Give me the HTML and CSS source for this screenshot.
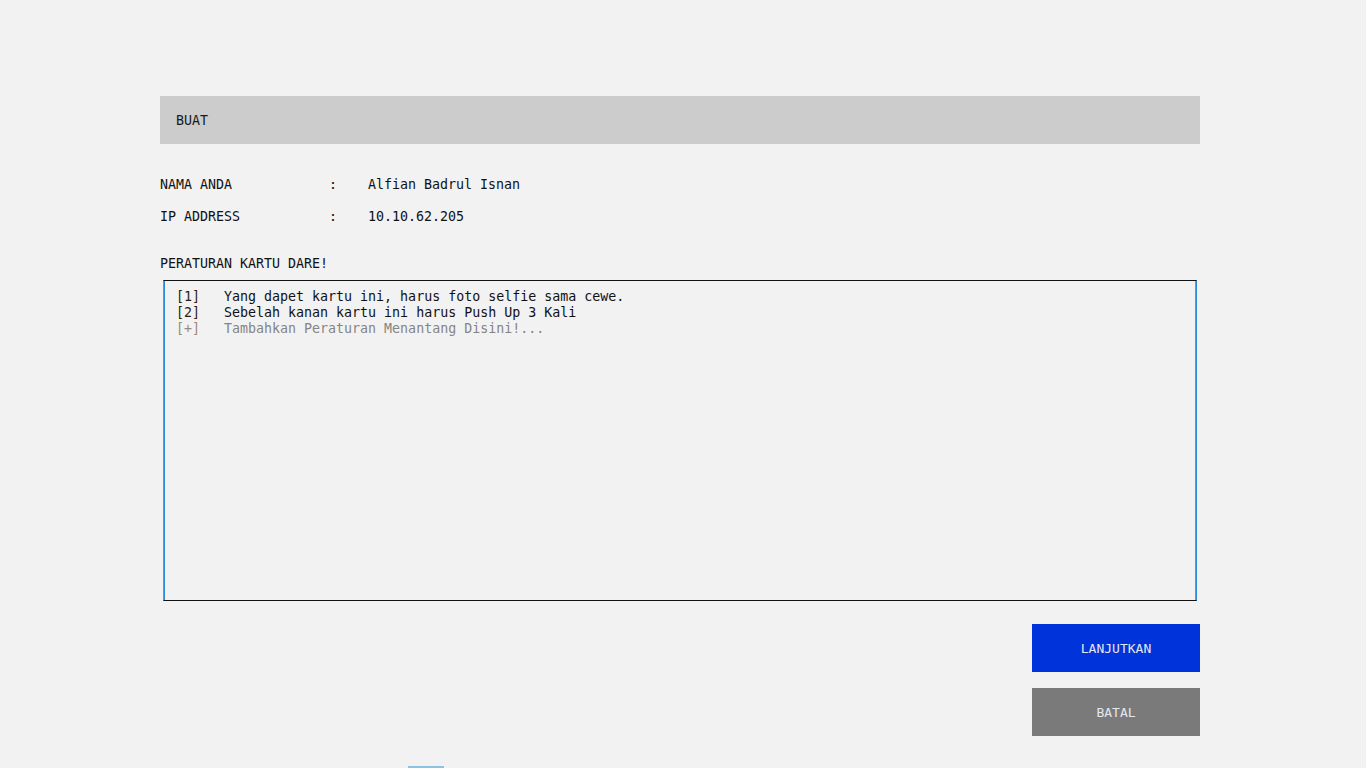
FILE: index.html
```html
<!DOCTYPE html>
<html lang="id">
<head>
<meta charset="utf-8">
<title>Buat</title>
<link rel="stylesheet" href="styles.css">
</head>
<body>
<main class="page">
  <header class="titlebar">BUAT</header>

  <section class="info">
    <div class="info-row"><span class="label">NAMA ANDA</span><span class="colon">:</span><span class="value">Alfian Badrul Isnan</span></div>
    <div class="info-row"><span class="label">IP ADDRESS</span><span class="colon">:</span><span class="value">10.10.62.205</span></div>
  </section>

  <h2 class="rules-title">PERATURAN KARTU DARE!</h2>
  <div class="rules-box">
    <div class="rule"><span class="num">[1]</span><span class="text">Yang dapet kartu ini, harus foto selfie sama cewe.</span></div>
    <div class="rule"><span class="num">[2]</span><span class="text">Sebelah kanan kartu ini harus Push Up 3 Kali</span></div>
    <div class="rule placeholder"><span class="num">[+]</span><span class="text">Tambahkan Peraturan Menantang Disini!...</span></div>
  </div>

  <div class="actions">
    <button class="btn btn-primary">LANJUTKAN</button>
    <button class="btn btn-cancel">BATAL</button>
  </div>
</main>
<div class="scroll-indicator"></div>
</body>
</html>
```

FILE: styles.css
```css
* { box-sizing: border-box; }

html, body {
  margin: 0;
  padding: 0;
  background: #f2f2f2;
  height: 768px;
  overflow: hidden;
}

body {
  font-family: "DejaVu Sans Mono", "Liberation Mono", monospace;
  font-size: 13.3px;
  color: #111;
  position: relative;
}

.page {
  width: 1040px;
  margin: 0 0 0 160px;
  padding-top: 96px;
  display: flex;
  flex-direction: column;
}

.titlebar {
  height: 48px;
  background: #cccccc;
  padding-left: 16px;
  display: flex;
  align-items: center;
  color: #1a1a1a;
}

.info {
  margin-top: 32px;
  display: flex;
  flex-direction: column;
  gap: 16px;
}

.info-row {
  display: flex;
  height: 16px;
  align-items: center;
}

.label { width: 169px; }
.colon { width: 39px; }

.rules-title {
  margin: 32px 0 0 0;
  font-size: 13.3px;
  font-weight: normal;
  height: 16px;
  line-height: 16px;
}

.rules-box {
  margin: 8px 3px 0 3px;
  height: 321px;
  border-top: 1px solid #111;
  border-bottom: 1px solid #111;
  border-left: 1px solid #b8864a;
  border-right: 1px solid #2b8ad8;
  box-shadow: inset 1px 0 0 #2b8ad8, inset -1px 0 0 #b8864a;
  padding: 8px 12px;
}

.rule {
  display: flex;
  height: 16px;
  line-height: 16px;
}

.rule .num {
  width: 48px;
  color: #2a1f10;
}

.rule.placeholder .num { color: #9a8a78; }
.rule.placeholder .text { color: #858585; }

.actions {
  margin-top: 23px;
  display: flex;
  flex-direction: column;
  align-items: flex-end;
  gap: 16px;
}

.btn {
  width: 168px;
  height: 48px;
  border: none;
  font-family: inherit;
  font-size: 13px;
  color: #e6e6ee;
  cursor: pointer;
}

.btn-primary { background: #0033d9; }
.btn-cancel { background: #7a7a7a; }

.scroll-indicator {
  position: absolute;
  left: 408px;
  top: 766px;
  width: 36px;
  height: 2px;
  background: #8fc1e3;
}
```
